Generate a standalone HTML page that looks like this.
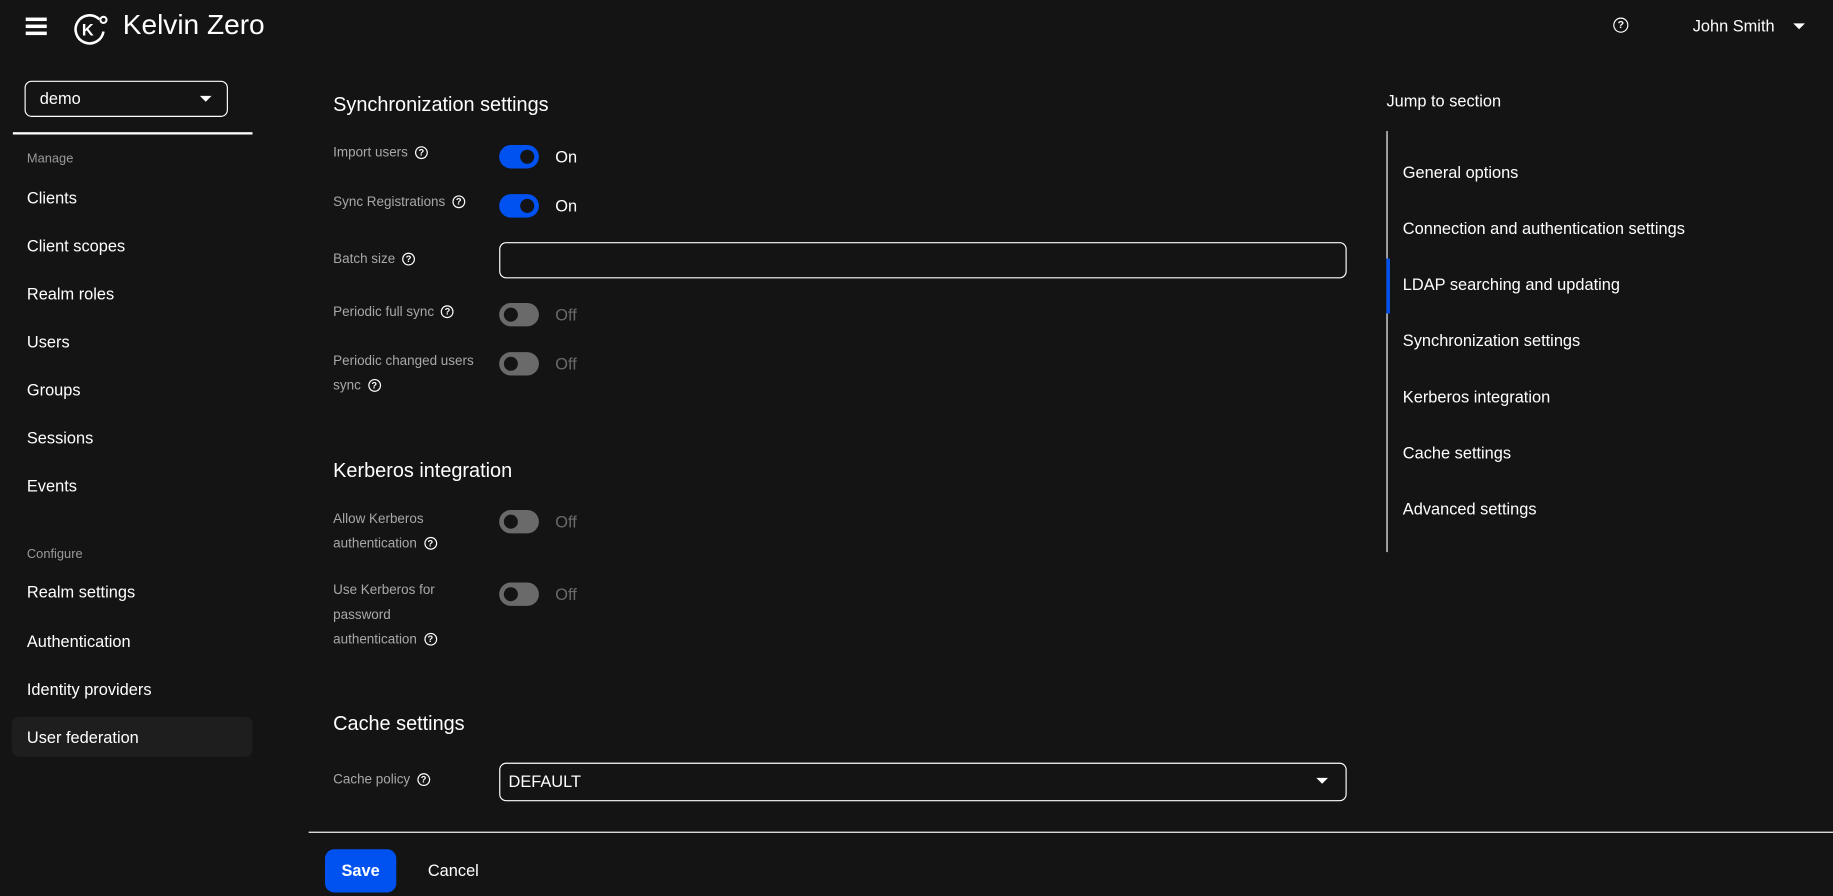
<!DOCTYPE html>
<html><head><meta charset="utf-8"><style>
html,body{margin:0;padding:0;background:#141414;width:1833px;height:896px;overflow:hidden}
#s{position:absolute;left:0;top:0;width:1568px;height:766px;transform:scale(1.16901,1.16971);transform-origin:0 0;font-family:"Liberation Sans",sans-serif;color:#fff}
.a{position:absolute;white-space:nowrap}
.nav{font-size:14px;left:23px}
.lab{font-size:11.5px;color:#a8a8a8;left:285px;line-height:21px}
.h{font-size:17px;left:285px}
.q{display:inline-block;width:9px;height:9px;border:1.5px solid #fff;border-radius:50%;font-size:8px;line-height:9px;text-align:center;color:#fff;font-weight:bold;vertical-align:1px;margin-left:6px}
.tg{position:absolute;left:427px;width:34px;height:20px;border-radius:10px}
.tg.on{background:#0052f0}.tg.off{background:#6a6a6a}
.tg:after{content:"";position:absolute;top:4px;width:12px;height:12px;border-radius:50%;background:#141414}
.tg.on:after{left:18px}.tg.off:after{left:4px}
.tt{position:absolute;left:475px;font-size:14px}
.tt.off{color:#6a6a6a}
.jn{font-size:14px;left:1200px}
.car{position:absolute;width:0;height:0;border-left:5px solid transparent;border-right:5px solid transparent;border-top:5px solid #fff}
</style></head><body><div id="s">
<!-- header -->
<div class="a" style="left:22px;top:15px;width:18px;height:3px;background:#fff;box-shadow:0 6px 0 #fff,0 12px 0 #fff"></div>
<svg class="a" style="left:61px;top:8px" width="34" height="34" viewBox="0 0 34 34"><path d="M24 8.5A12 12 0 1 0 27.5 19" fill="none" stroke="#fff" stroke-width="2.2"/><text x="9" y="22.5" font-size="14" font-weight="bold" fill="#fff" font-family="Liberation Sans">K</text><circle cx="27.5" cy="9" r="2.6" fill="none" stroke="#fff" stroke-width="1.8"/></svg>
<div class="a" style="left:105px;top:8px;font-size:24px">Kelvin Zero</div>
<div class="a" style="left:1380px;top:15px;width:11px;height:11px;border:1.5px solid #fff;border-radius:50%;font-size:9px;line-height:11px;text-align:center;font-weight:bold">?</div>
<div class="a" style="left:1448px;top:14px;font-size:14px">John Smith</div>
<div class="car" style="left:1534px;top:20px"></div>
<!-- sidebar -->
<div class="a" style="left:21px;top:69px;width:172px;height:29px;border:1px solid #fff;border-radius:6px"></div>
<div class="a" style="left:34px;top:76px;font-size:14px">demo</div>
<div class="car" style="left:171px;top:82px"></div>
<div class="a" style="left:11px;top:113px;width:205px;height:2px;background:#fff"></div>
<div class="a" style="left:23px;top:130px;font-size:11px;color:#9a9a9a">Manage</div>
<div class="a nav" style="top:161px">Clients</div>
<div class="a nav" style="top:202px">Client scopes</div>
<div class="a nav" style="top:243px">Realm roles</div>
<div class="a nav" style="top:284px">Users</div>
<div class="a nav" style="top:325px">Groups</div>
<div class="a nav" style="top:366px">Sessions</div>
<div class="a nav" style="top:407px">Events</div>
<div class="a" style="left:23px;top:468px;font-size:11px;color:#9a9a9a">Configure</div>
<div class="a nav" style="top:498px">Realm settings</div>
<div class="a nav" style="top:540px">Authentication</div>
<div class="a nav" style="top:581px">Identity providers</div>
<div class="a" style="left:10px;top:613px;width:206px;height:34px;background:#1e1e1e;border-radius:6px"></div>
<div class="a nav" style="top:622px">User federation</div>
<!-- main -->
<div class="a h" style="top:80px">Synchronization settings</div>
<div class="a lab" style="top:121px">Import users<span class="q">?</span></div>
<div class="tg on" style="top:124px"></div><div class="tt" style="top:126px">On</div>
<div class="a lab" style="top:163px">Sync Registrations<span class="q">?</span></div>
<div class="tg on" style="top:166px"></div><div class="tt" style="top:168px">On</div>
<div class="a lab" style="top:212px">Batch size<span class="q">?</span></div>
<div class="a" style="left:427px;top:207px;width:723px;height:29px;border:1px solid #fff;border-radius:6px"></div>
<div class="a lab" style="top:257px">Periodic full sync<span class="q">?</span></div>
<div class="tg off" style="top:259px"></div><div class="tt off" style="top:261px">Off</div>
<div class="a lab" style="top:299px">Periodic changed users<br>sync<span class="q">?</span></div>
<div class="tg off" style="top:301px"></div><div class="tt off" style="top:303px">Off</div>
<div class="a h" style="top:393px">Kerberos integration</div>
<div class="a lab" style="top:434px">Allow Kerberos<br>authentication<span class="q">?</span></div>
<div class="tg off" style="top:436px"></div><div class="tt off" style="top:438px">Off</div>
<div class="a lab" style="top:495px">Use Kerberos for<br>password<br>authentication<span class="q">?</span></div>
<div class="tg off" style="top:498px"></div><div class="tt off" style="top:500px">Off</div>
<div class="a h" style="top:609px">Cache settings</div>
<div class="a lab" style="top:657px">Cache policy<span class="q">?</span></div>
<div class="a" style="left:427px;top:652px;width:723px;height:31px;border:1px solid #fff;border-radius:6px"></div>
<div class="a" style="left:435px;top:660px;font-size:14px">DEFAULT</div>
<div class="car" style="left:1126px;top:665px"></div>
<div class="a" style="left:264px;top:711px;width:1304px;height:1px;background:#fff"></div>
<div class="a" style="left:278px;top:726px;width:61px;height:37px;background:#0052f0;border-radius:8px;font-size:14px;font-weight:bold;text-align:center;line-height:37px">Save</div>
<div class="a" style="left:366px;top:736px;font-size:14px">Cancel</div>
<!-- jump -->
<div class="a" style="left:1186px;top:78px;font-size:14px">Jump to section</div>
<div class="a" style="left:1186px;top:112px;width:1px;height:360px;background:#fff"></div>
<div class="a" style="left:1186px;top:221px;width:3px;height:47px;background:#0052f0"></div>
<div class="a jn" style="top:139px">General options</div>
<div class="a jn" style="top:187px">Connection and authentication settings</div>
<div class="a jn" style="top:235px">LDAP searching and updating</div>
<div class="a jn" style="top:283px">Synchronization settings</div>
<div class="a jn" style="top:331px">Kerberos integration</div>
<div class="a jn" style="top:379px">Cache settings</div>
<div class="a jn" style="top:427px">Advanced settings</div>
</div></body></html>
